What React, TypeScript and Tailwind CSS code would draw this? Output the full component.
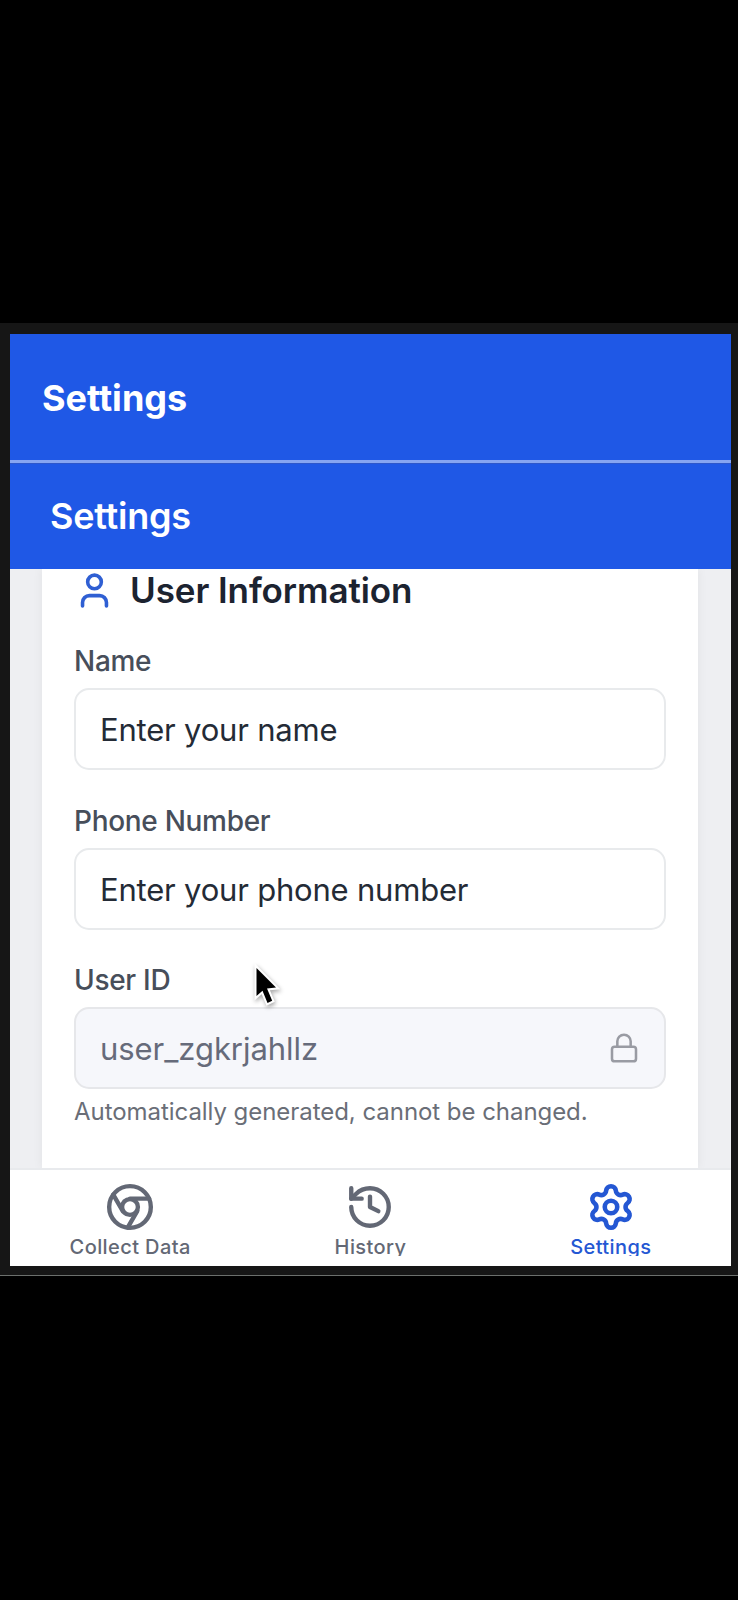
import type { ReactNode } from "react";
import { History, Lock, Settings, User } from "lucide-react";

type FieldProps = { label: string; value: string; locked?: boolean; note?: string };

function Field({ label, value, locked, note }: FieldProps) {
  return (
    <div>
      <div className="mb-[7px] h-10 text-[28px] leading-10 font-medium tracking-[-0.3px] text-[#474e5a]">
        {label}
      </div>
      <div
        className={
          locked
            ? "flex h-[82px] items-center justify-between rounded-[15px] border-2 border-[#e6e7ea] bg-[#f6f7fb] px-6 pt-[2px] text-[31px] tracking-[-0.05px] text-[#666b7a]"
            : "flex h-[82px] items-center rounded-[15px] border-2 border-[#e8eaec] bg-white px-6 pt-[3px] text-[31px] tracking-[-0.2px] text-[#242b36]"
        }
      >
        <span>{value}</span>
        {locked && <Lock className="mb-[2px] size-8 text-[#999ba3]" strokeWidth={1.9} />}
      </div>
      {note && <p className="mt-[5px] text-[24px] leading-9 tracking-[-0.05px] text-[#6a6e77]">{note}</p>}
    </div>
  );
}

function BrowserIcon() {
  return (
    <svg
      className="size-[50px] shrink-0"
      viewBox="0 0 24 24"
      fill="none"
      stroke="currentColor"
      strokeWidth="2.1"
      strokeLinecap="round"
      strokeLinejoin="round"
    >
      <circle cx="12" cy="12" r="10" />
      <circle cx="12" cy="12" r="3.8" />
      <path d="M21.17 8H12" />
      <path d="M3.95 6.06L8.54 14" />
      <path d="M10.88 21.94L15.46 14" />
    </svg>
  );
}

function NavItem({ icon, label, active }: { icon: ReactNode; label: string; active?: boolean }) {
  return (
    <div
      className={
        active
          ? "flex flex-1 flex-col items-center text-[#2457d3]"
          : "flex flex-1 flex-col items-center text-[#636875]"
      }
    >
      {icon}
      <span className="mt-[2px] text-[20px] leading-[26px] font-medium tracking-[0.4px]">{label}</span>
    </div>
  );
}

export default function App() {
  return (
    <div className="relative h-[1600px] w-[738px] overflow-hidden bg-black pt-[323px] font-[Inter,sans-serif]">
      <div className="h-[953px] border-b border-[#6c706d] bg-[#161616] pt-[11px] pl-[10px]">
        <div className="flex h-[932px] w-[721px] flex-col bg-[#eeeff2]">
          <header className="flex h-[126px] shrink-0 items-center bg-[#1f58e6] px-8 pt-[2px]">
            <h1 className="text-[36px] leading-none font-bold text-white">Settings</h1>
          </header>
          <div className="h-[3px] shrink-0 bg-[#86a5f2]" />
          <header className="flex h-[106px] shrink-0 items-center border-t border-[#2d57cb] bg-[#1f58e6] px-10 pb-px">
            <h2 className="text-[36px] leading-none font-semibold tracking-[-0.25px] text-white">Settings</h2>
          </header>

          <main className="h-[599px] shrink-0 overflow-hidden pl-8">
            <section className="h-full w-[656px] bg-white px-8 pt-px shadow-[0_0_10px_rgba(0,0,0,0.06)]">
              <div className="flex h-10 items-center gap-[15px]">
                <User className="size-[41px] text-[#2f5fd3]" strokeWidth={2.1} />
                <h3 className="text-[35px] leading-10 font-semibold tracking-[-0.08px] text-[#1c2330]">
                  User Information
                </h3>
              </div>
              <div className="mt-[31px]">
                <Field label="Name" value="Enter your name" />
              </div>
              <div className="mt-[31px]">
                <Field label="Phone Number" value="Enter your phone number" />
              </div>
              <div className="mt-[30px]">
                <Field
                  label="User ID"
                  value="user_zgkrjahllz"
                  locked
                  note="Automatically generated, cannot be changed."
                />
              </div>
            </section>
          </main>

          <nav className="h-[98px] shrink-0 border-t-2 border-[#e8eaed] bg-white">
            <div className="flex h-[86px] overflow-hidden pt-3">
              <NavItem icon={<BrowserIcon />} label="Collect Data" />
              <NavItem icon={<History className="size-[50px] shrink-0" strokeWidth={2.1} />} label="History" />
              <NavItem icon={<Settings className="size-[50px] shrink-0" strokeWidth={2.2} />} label="Settings" active />
            </div>
          </nav>
        </div>
      </div>

      <svg
        className="absolute top-[961px] left-[250px] h-[50px] w-[36px] drop-shadow-[1px_2px_2px_rgba(0,0,0,0.35)]"
        viewBox="252 962 36 50"
      >
        <path
          d="M258.5 969L278 988.6L269 989.6L274.2 1001.8L269.5 1004L264.5 991.8L258.5 997Z"
          fill="#000"
          stroke="#fff"
          strokeWidth="4"
          strokeLinejoin="miter"
          paintOrder="stroke"
        />
      </svg>
    </div>
  );
}
